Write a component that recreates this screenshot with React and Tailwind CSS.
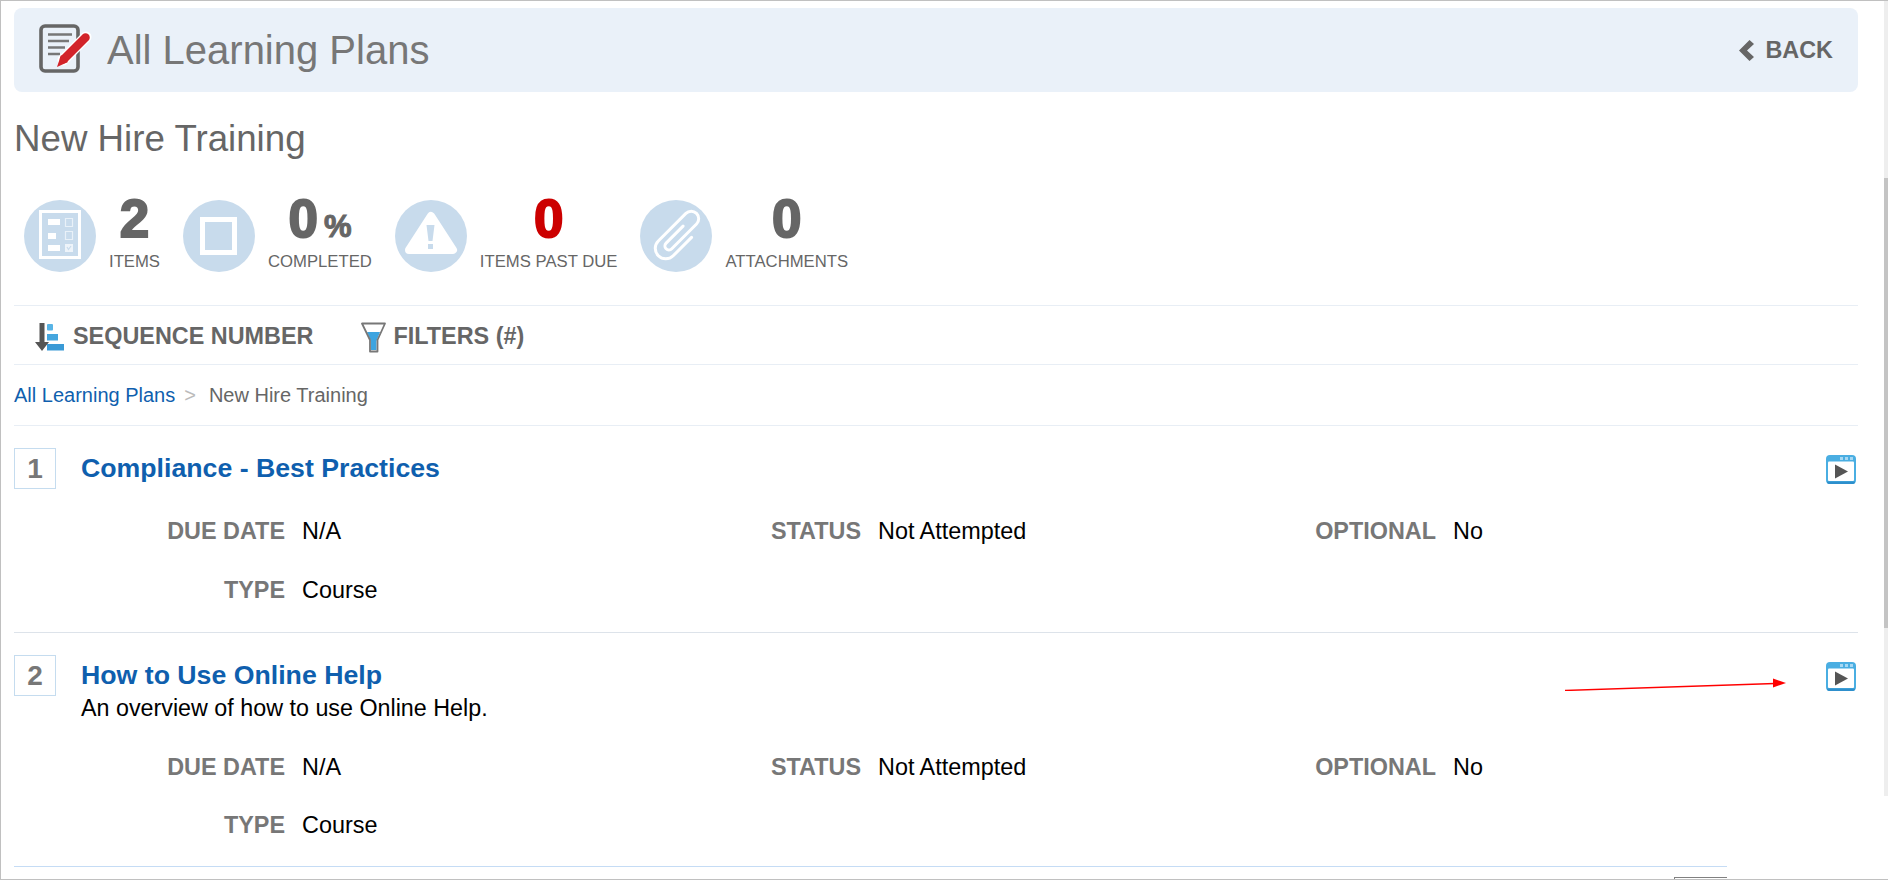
const font = { fontFamily: '"Liberation Sans", Arial, sans-serif' };

function PlanIcon() {
  return (
    <svg width="54" height="52" viewBox="0 0 54 52" className="shrink-0">
      <rect x="2" y="2" width="37" height="45" rx="4" fill="none" stroke="#666" strokeWidth="3.6" />
      <path d="M9 10.5h24M9 17h21M9 23.5h17M9 30h12" stroke="#777" strokeWidth="2.6" fill="none" />
      <path d="M24 36 L47 13" stroke="#ffffff" strokeWidth="11" strokeLinecap="round" fill="none" />
      <path d="M25 35 L46.5 13.5" stroke="#d2232a" strokeWidth="8.5" strokeLinecap="round" fill="none" />
      <path d="M22 31 L29 38 L18 43 Z" fill="#d2232a" />
    </svg>
  );
}

function ItemsIcon() {
  return (
    <svg width="72" height="72" viewBox="0 0 72 72" className="shrink-0">
      <circle cx="36" cy="36" r="36" fill="#c8dbec" />
      <rect x="16.5" y="11.5" width="39" height="46" fill="none" stroke="#fff" strokeWidth="3" />
      <path d="M24 19h12v6H24zM24 33h8v6h-8zM24 45h12v6H24z" fill="#fff" />
      <path d="M41.5 18.5h7v8h-7zM41.5 31.5h7v8h-7z" fill="none" stroke="#e9f1f8" strokeWidth="1.2" />
      <path d="M41 44h8v8h-8z" fill="#eef4fa" />
      <path d="M43 47l1.5 2.5 2.5-3.5" fill="none" stroke="#c8dbec" strokeWidth="1.2" />
    </svg>
  );
}

function SquareIcon() {
  return (
    <svg width="72" height="72" viewBox="0 0 72 72" className="shrink-0">
      <circle cx="36" cy="36" r="36" fill="#c8dbec" />
      <rect x="19.5" y="19.5" width="32" height="33" fill="none" stroke="#fff" strokeWidth="5" />
    </svg>
  );
}

function WarningIcon() {
  return (
    <svg width="72" height="72" viewBox="0 0 72 72" className="shrink-0">
      <circle cx="36" cy="36" r="36" fill="#c8dbec" />
      <path d="M36 16 L58 50 H14 Z" fill="#fff" stroke="#fff" strokeWidth="8" strokeLinejoin="round" />
      <path d="M31.5 25h8l-2 16h-4z" fill="#c8dbec" />
      <rect x="33" y="44" width="5" height="5" fill="#c8dbec" />
    </svg>
  );
}

function ClipIcon() {
  return (
    <svg width="72" height="72" viewBox="0 0 72 72" className="shrink-0">
      <circle cx="36" cy="36" r="36" fill="#c8dbec" />
      <path
        d="M48 26V52a10.5 10.5 0 0 1-21 0V13a7.5 7.5 0 0 1 15 0V48a4 4 0 0 1-8 0V24"
        fill="none"
        stroke="#fff"
        strokeWidth="3"
        strokeLinecap="round"
        transform="rotate(45 36 36)"
      />
    </svg>
  );
}

function SortIcon() {
  return (
    <svg width="30" height="30" viewBox="0 0 30 30" className="shrink-0">
      <path d="M5.5 1h5v19h4.5L8 29 1 20h4.5z" fill="#555" />
      <rect x="13" y="2" width="6" height="6.5" rx="1" fill="#58b4e6" />
      <rect x="13" y="12" width="11" height="6.5" fill="#45a6de" />
      <rect x="13" y="22" width="17" height="6.5" fill="#3a9ad6" />
    </svg>
  );
}

function FunnelIcon() {
  return (
    <svg width="25" height="31" viewBox="0 0 25 31" className="shrink-0">
      <path d="M6 10 H19 L15.5 19 V28 H10 V19 Z" fill="#3da4e0" />
      <path d="M1 1.5H24L16.5 18V29.5H9V18Z" fill="none" stroke="#777" strokeWidth="1.8" strokeLinejoin="round" />
    </svg>
  );
}

function PlayIcon() {
  return (
    <svg width="30" height="29" viewBox="0 0 30 29" className="mt-[7px] mr-[2px] ml-auto shrink-0">
      <rect x="0" y="0" width="30" height="29" rx="4" fill="#4aaee2" />
      <rect x="2" y="6.5" width="26" height="19.5" rx="1" fill="#fff" />
      <path d="M1 26.5h28v0.5a2 2 0 0 1-2 2H3a2 2 0 0 1-2-2z" fill="#2e8fcc" />
      <rect x="14" y="2" width="3" height="3" fill="#a6d8f3" />
      <rect x="19" y="2" width="3" height="3" fill="#a6d8f3" />
      <rect x="24" y="2" width="3" height="3" fill="#a6d8f3" />
      <path d="M9 9.5 L22 16.5 L9 23.5 Z" fill="#555" />
    </svg>
  );
}

function Stat({ icon, value, suffix, label, red }) {
  return (
    <div className="flex items-start gap-[13px]">
      <div className="mt-1">{icon}</div>
      <div className="flex flex-col items-center">
        <div
          className={`h-[46px] text-[53px] leading-[46px] font-bold [-webkit-text-stroke:2px_currentColor] ${red ? 'text-[#cc0000]' : 'text-[#666]'}`}
        >
          {value}
          {suffix && <span className="ml-[6px] text-[31px] [-webkit-text-stroke:1px_currentColor]">{suffix}</span>}
        </div>
        <div className="mt-[10px] text-[16.7px] leading-5 text-[#666]">{label}</div>
      </div>
    </div>
  );
}

function Fields({ first, second, className }) {
  return (
    <div className={`grid grid-cols-[288px_300px_276px_300px_275px_1fr] items-center text-[23.4px] ${className}`}>
      {first.map(([label, value]) => (
        <div key={label} className="contents">
          <div className="pr-[17px] text-right font-bold text-[#777]">{label}</div>
          <div className="text-black">{value}</div>
        </div>
      ))}
      {second.map(([label, value]) => (
        <div key={label} className="contents">
          <div className="pr-[17px] text-right font-bold text-[#777]">{label}</div>
          <div className="text-black">{value}</div>
        </div>
      ))}
    </div>
  );
}

function PlanItem({ num, title, desc, className, fieldsClass }) {
  return (
    <div className={className}>
      <div className="flex">
        <div className="flex h-[41px] w-[42px] shrink-0 items-center justify-center border border-[#c5dcef] text-[28px] font-bold text-[#777]">
          {num}
        </div>
        <div className="ml-[25px]">
          <div className="text-[26.7px] leading-[41px] font-bold text-[#0f5fae]">{title}</div>
          {desc && <div className="text-[23.3px] leading-6 text-black">{desc}</div>}
        </div>
        <PlayIcon />
      </div>
      <Fields
        className={fieldsClass}
        first={[['DUE DATE', 'N/A'], ['STATUS', 'Not Attempted'], ['OPTIONAL', 'No']]}
        second={[['TYPE', 'Course']]}
      />
    </div>
  );
}

export default function App() {
  return (
    <div style={font} className="relative flex h-[880px] w-[1888px] overflow-hidden border-t border-b border-l border-[#c0c0c0] bg-white">
      <div className="w-[1857px] shrink-0 pl-[13px]">
        <div className="mt-[7px] flex h-[84px] items-center rounded-lg bg-[#eaf1f9] pr-[25px] pl-[25px]">
          <PlanIcon />
          <h1 className="ml-[14px] text-[40px] text-[#777]">All Learning Plans</h1>
          <div className="ml-auto flex items-center gap-[11px] pt-[2px] text-[23.4px] font-bold text-[#666]">
            <svg width="15" height="21" viewBox="0 0 15 21">
              <path d="M10.5 0 L15 4 L8 10.5 L15 17 L10.5 21 L0 10.5 Z" fill="#666" />
            </svg>
            BACK
          </div>
        </div>

        <h2 className="mt-[27px] text-[36.7px] leading-10 text-[#666]">New Hire Training</h2>

        <div className="mt-[37px] mb-[33px] flex items-start gap-[23px] pl-[10px]">
          <Stat icon={<ItemsIcon />} value="2" label="ITEMS" />
          <Stat icon={<SquareIcon />} value="0" suffix="%" label="COMPLETED" />
          <Stat icon={<WarningIcon />} value="0" label="ITEMS PAST DUE" red />
          <Stat icon={<ClipIcon />} value="0" label="ATTACHMENTS" />
        </div>

        <div className="flex h-[59px] items-center border-t border-[#e8eef5] pt-1 pl-[20px] text-[23.4px] font-bold text-[#666]">
          <SortIcon />
          <span className="ml-[9px]">SEQUENCE NUMBER</span>
          <div className="ml-[48px]">
            <FunnelIcon />
          </div>
          <span className="ml-[7px]">FILTERS (#)</span>
        </div>

        <div className="flex h-[61px] items-center border-t border-[#e8eef5] text-[20px]">
          <span className="text-[#0f5fae]">All Learning Plans</span>
          <span className="mx-[9px] text-[#bbb]">&gt;</span>
          <span className="ml-1 text-[#666]">New Hire Training</span>
        </div>

        <PlanItem
          num="1"
          title="Compliance - Best Practices"
          fieldsClass="mt-[13px] auto-rows-[59px]"
          className="h-[207px] border-t border-[#e8eef5] pt-[22px]"
        />
        <PlanItem
          num="2"
          title="How to Use Online Help"
          desc="An overview of how to use Online Help."
          fieldsClass="mt-[19px] auto-rows-[58px]"
          className="h-[234px] border-t border-[#dde3ea] pt-[22px]"
        />

        <div className="w-[1713px] border-t border-[#c5dcf5]">
          <div className="mt-[10px] ml-auto h-4 w-[53px] border-t border-l border-[#808080]" />
        </div>
      </div>

      <div className="ml-auto flex h-[795px] w-1 flex-col bg-[#eeeeee]">
        <div className="mt-[177px] h-[450px] bg-[#c4c4c4]" />
      </div>

      {/* annotation arrow sitting over the page */}
      <svg width="240" height="16" viewBox="0 0 240 16" className="absolute top-[674px] left-[1556px]">
        <path d="M8 15.5 L218 8.5" stroke="#ff0000" strokeWidth="1.4" fill="none" />
        <path d="M216 3.5 L229 8 L216 12.5 Z" fill="#ff0000" />
      </svg>
    </div>
  );
}
